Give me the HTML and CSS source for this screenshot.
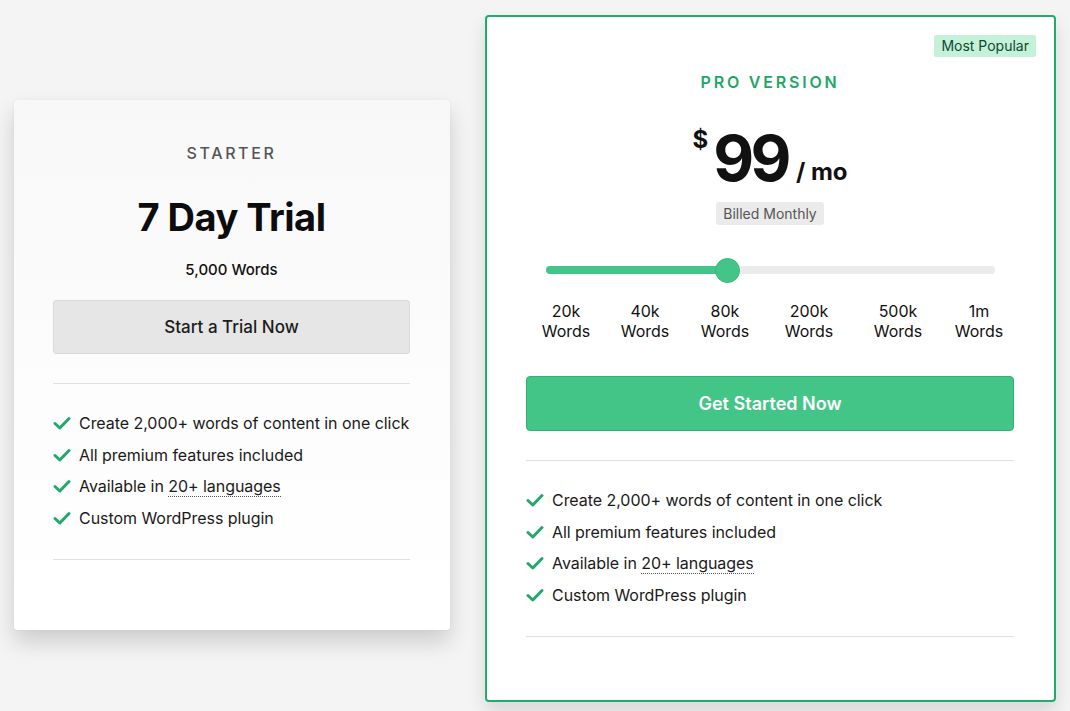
FILE: index.html
```html
<!DOCTYPE html>
<html lang="en">
<head>
<meta charset="utf-8">
<title>Pricing</title>
<link rel="stylesheet" href="styles.css">
</head>
<body>
<div class="wrap">
  <section class="card starter">
    <div class="plan-name">STARTER</div>
    <div class="trial">7 Day Trial</div>
    <div class="words">5,000 Words</div>
    <button class="btn btn-gray">Start a Trial Now</button>
    <hr class="divider first">
    <ul class="features">
      <li><svg class="check" viewBox="0 0 18 14"><path d="M2 7.5 L6.8 12 L16 2.5"/></svg>Create 2,000+ words of content in one click</li>
      <li><svg class="check" viewBox="0 0 18 14"><path d="M2 7.5 L6.8 12 L16 2.5"/></svg>All premium features included</li>
      <li><svg class="check" viewBox="0 0 18 14"><path d="M2 7.5 L6.8 12 L16 2.5"/></svg>Available in&nbsp;<span class="dotted">20+ languages</span></li>
      <li><svg class="check" viewBox="0 0 18 14"><path d="M2 7.5 L6.8 12 L16 2.5"/></svg>Custom WordPress plugin</li>
    </ul>
    <hr class="divider">
  </section>

  <section class="card pro">
    <span class="badge">Most Popular</span>
    <div class="plan-name green">PRO VERSION</div>
    <div class="price"><span class="cur">$</span><span class="amount">99</span><span class="per">/ mo</span></div>
    <div class="billed-row"><span class="billed">Billed Monthly</span></div>
    <div class="slider">
      <div class="track"><div class="fill" style="width:40.5%"></div><div class="thumb" style="left:40.5%"></div></div>
    </div>
    <div class="ticks">
      <span>20k<br>Words</span>
      <span>40k<br>Words</span>
      <span>80k<br>Words</span>
      <span>200k<br>Words</span>
      <span>500k<br>Words</span>
      <span>1m<br>Words</span>
    </div>
    <button class="btn btn-green">Get Started Now</button>
    <hr class="divider pro-first">
    <ul class="features">
      <li><svg class="check" viewBox="0 0 18 14"><path d="M2 7.5 L6.8 12 L16 2.5"/></svg>Create 2,000+ words of content in one click</li>
      <li><svg class="check" viewBox="0 0 18 14"><path d="M2 7.5 L6.8 12 L16 2.5"/></svg>All premium features included</li>
      <li><svg class="check" viewBox="0 0 18 14"><path d="M2 7.5 L6.8 12 L16 2.5"/></svg>Available in&nbsp;<span class="dotted">20+ languages</span></li>
      <li><svg class="check" viewBox="0 0 18 14"><path d="M2 7.5 L6.8 12 L16 2.5"/></svg>Custom WordPress plugin</li>
    </ul>
    <hr class="divider">
  </section>
</div>
</body>
</html>
```

FILE: styles.css
```css
* { box-sizing: border-box; }
html, body { margin: 0; padding: 0; }
body {
  background: #f4f4f4;
  font-family: Inter, "Noto Sans", "Liberation Sans", sans-serif;
  color: #111;
  width: 1070px;
  height: 711px;
  overflow: hidden;
}
.wrap {
  display: flex;
  align-items: flex-start;
  gap: 35px;
  padding: 15px 14px 9px;
}
.card {
  display: flex;
  flex-direction: column;
  border-radius: 4px;
}
.starter {
  width: 436px;
  height: 530px;
  margin-top: 85px;
  padding: 43px 40px 0 39px;
  background: linear-gradient(#f8f8f8 0%, #fafafa 28%, #fdfdfd 60%, #ffffff 100%);
  box-shadow: 0 12px 22px rgba(0,0,0,0.16), 0 0 3px rgba(0,0,0,0.05);
}
.pro {
  position: relative;
  width: 571px;
  height: 687px;
  padding: 55px 40px 0 39px;
  background: #fff;
  border: 2px solid #22ab6c;
  box-shadow: 0 10px 18px rgba(0,0,0,0.12);
}
.plan-name {
  text-align: center;
  font-size: 16px;
  line-height: 20px;
  letter-spacing: 2.6px;
  font-weight: 500;
  color: #555;
}
.plan-name.green {
  color: #1fa766;
  font-weight: 600;
  letter-spacing: 2.8px;
}
.trial {
  text-align: center;
  font-size: 38px;
  line-height: 46px;
  font-weight: 700;
  letter-spacing: -0.5px;
  margin-top: 31px;
  color: #0c0c0c;
}
.words {
  text-align: center;
  font-size: 15px;
  line-height: 20px;
  font-weight: 500;
  margin-top: 20px;
}
.btn {
  display: block;
  width: 100%;
  border-radius: 3px;
  font-family: inherit;
  cursor: pointer;
}
.btn-gray {
  height: 54px;
  margin-top: 20px;
  background: #e6e6e6;
  border: 1px solid #dadada;
  font-size: 17px;
  font-weight: 500;
  color: #1c1c1c;
}
.btn-green {
  height: 55px;
  margin-top: 35px;
  background: #43c587;
  border: 1px solid #2eb372;
  border-radius: 4px;
  color: #fff;
  font-size: 18px;
  font-weight: 600;
}
.divider {
  border: 0;
  border-top: 1px solid #e0e0e0;
  margin: 25px 0 0;
  height: 0;
}
.divider.first { margin-top: 29px; }
.divider.pro-first { margin-top: 29px; }
.features {
  list-style: none;
  margin: 23px 0 0;
  padding: 0;
}
.features li {
  display: flex;
  align-items: center;
  font-size: 16px;
  line-height: 32px;
  height: 31.7px;
  color: #1a1a1a;
  white-space: nowrap;
  letter-spacing: -0.05px;
}
.check {
  width: 18px;
  height: 14px;
  margin-right: 8px;
  flex: none;
}
.check path {
  fill: none;
  stroke: #22a86a;
  stroke-width: 3;
  stroke-linecap: round;
  stroke-linejoin: round;
}
.dotted {
  border-bottom: 1px dotted #555;
  line-height: 20px;
}
.badge {
  position: absolute;
  top: 18px;
  right: 18px;
  background: #c4f1da;
  color: #0e4a2d;
  font-size: 14px;
  line-height: 22px;
  padding: 0 7px;
  border-radius: 2px;
}
.price {
  display: flex;
  justify-content: center;
  align-items: flex-start;
  margin-top: 30px;
  height: 72px;
}
.cur {
  font-size: 24px;
  font-weight: 700;
  line-height: 28px;
  margin-top: 4px;
  margin-right: 5px;
}
.amount {
  font-size: 63px;
  font-weight: 700;
  line-height: 72px;
  letter-spacing: -3.5px;
}
.per {
  font-size: 24px;
  font-weight: 700;
  line-height: 28px;
  margin-top: 36px;
  margin-left: 8px;
}
.billed-row {
  display: flex;
  justify-content: center;
  margin-top: 8px;
}
.billed {
  background: #ebebeb;
  color: #555;
  font-size: 14px;
  line-height: 23px;
  padding: 0 7px;
  border-radius: 3px;
}
.slider {
  padding: 0 19px 0 20px;
  margin-top: 41px;
}
.track {
  position: relative;
  height: 8px;
  border-radius: 4px;
  background: #ebebeb;
}
.fill {
  height: 8px;
  border-radius: 4px;
  background: #43c587;
}
.thumb {
  position: absolute;
  top: 50%;
  width: 25px;
  height: 25px;
  margin: -12.5px 0 0 -12.5px;
  border-radius: 50%;
  background: #43c587;
  border: 1px solid #37b979;
}
.ticks {
  display: grid;
  grid-template-columns: 80px 78px 82px 86px 92px 70px;
  margin-top: 28px;
}
.ticks span {
  display: block;
  text-align: center;
  font-size: 16px;
  line-height: 19.5px;
  color: #111;
}
```
